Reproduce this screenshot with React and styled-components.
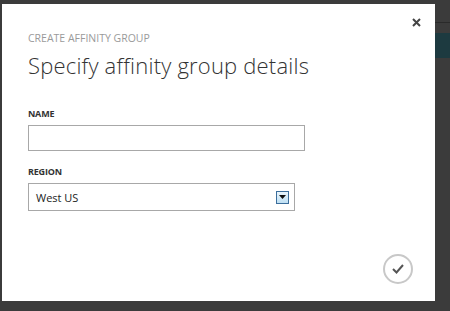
import React from "react";
import styled, { createGlobalStyle } from "styled-components";

const GlobalStyle = createGlobalStyle`
  html, body {
    margin: 0;
    padding: 0;
    background: #3b3b3b;
    font-family: "Open Sans", "Liberation Sans", sans-serif;
  }
`;

const Screen = styled.div`
  width: 450px;
  height: 311px;
  display: flex;
  background: #3b3b3b;
  overflow: hidden;
`;

const Dialog = styled.div`
  position: relative;
  width: 433px;
  height: 297px;
  margin: 4px 0 0 2px;
  background: #fff;
  box-sizing: border-box;
  padding: 26px 26px 0 26px;
`;

const Backdrop = styled.div`
  flex: 1;
  display: flex;
  flex-direction: column;
`;

const BackdropLine = styled.div`
  margin-top: 22px;
  height: 1px;
  background: #2a2a2a;
`;

const BackdropBand = styled.div`
  margin-top: 10px;
  height: 25px;
  background: #1d3a40;
`;

const Close = styled.button`
  position: absolute;
  top: 12px;
  right: 13px;
  width: 12px;
  height: 12px;
  padding: 0;
  border: none;
  background: transparent;
  display: flex;
  align-items: center;
  justify-content: center;
`;

const Eyebrow = styled.div`
  font-size: 10.5px;
  color: #9a9a9a;
  letter-spacing: 0;
  line-height: 14px;
  margin-top: 1px;
`;

const Title = styled.h1`
  margin: 5px 0 0 0;
  font-size: 22px;
  font-weight: 300;
  color: #333;
  line-height: 30px;
  letter-spacing: 0.2px;
`;

const Field = styled.div`
  display: flex;
  flex-direction: column;
  margin-top: ${({ $gap }) => $gap}px;
`;

const Label = styled.label`
  font-size: 9px;
  font-weight: 700;
  color: #333;
  line-height: 12px;
  margin-bottom: 5px;
  letter-spacing: -0.2px;
`;

const TextInput = styled.input`
  width: ${({ $w }) => $w}px;
  height: 26px;
  box-sizing: border-box;
  border: 1px solid #a8a8a8;
  outline: none;
  padding: 0 6px;
  margin: 0;
`;

const Select = styled.div`
  width: 267px;
  height: 28px;
  box-sizing: border-box;
  border: 1px solid #a8a8a8;
  display: flex;
  align-items: center;
  justify-content: space-between;
  padding: 0 5px 0 7px;
  font-size: 11px;
  color: #222;
`;

const Arrow = styled.div`
  width: 13px;
  height: 13px;
  box-sizing: border-box;
  border: 1px solid #3c6e9c;
  background: linear-gradient(#eaf5fc, #bfe0f4);
  display: flex;
  align-items: center;
  justify-content: center;
`;

const Confirm = styled.button`
  position: absolute;
  right: 22px;
  bottom: 17px;
  width: 30px;
  height: 30px;
  box-sizing: border-box;
  border: 2px solid #c8c8c8;
  border-radius: 50%;
  background: #fff;
  display: flex;
  align-items: center;
  justify-content: center;
  padding: 0;
`;

export default function App() {
  return (
    <Screen>
      <GlobalStyle />
      <Dialog>
        <Close>
          <svg width="9" height="9" viewBox="0 0 9 9">
            <path d="M1 1L8 8M8 1L1 8" stroke="#444" strokeWidth="2" />
          </svg>
        </Close>
        <Eyebrow>CREATE AFFINITY GROUP</Eyebrow>
        <Title>Specify affinity group details</Title>
        <Field $gap={28}>
          <Label>NAME</Label>
          <TextInput $w={277} />
        </Field>
        <Field $gap={15}>
          <Label>REGION</Label>
          <Select>
            <span>West US</span>
            <Arrow>
              <svg width="7" height="4" viewBox="0 0 7 4">
                <path d="M0 0H7L3.5 4Z" fill="#111" />
              </svg>
            </Arrow>
          </Select>
        </Field>
        <Confirm>
          <svg width="14" height="12" viewBox="0 0 14 12">
            <path d="M2 6L5.5 9.5L12 2" fill="none" stroke="#555" strokeWidth="2" />
          </svg>
        </Confirm>
      </Dialog>
      <Backdrop>
        <BackdropLine />
        <BackdropBand />
      </Backdrop>
    </Screen>
  );
}
